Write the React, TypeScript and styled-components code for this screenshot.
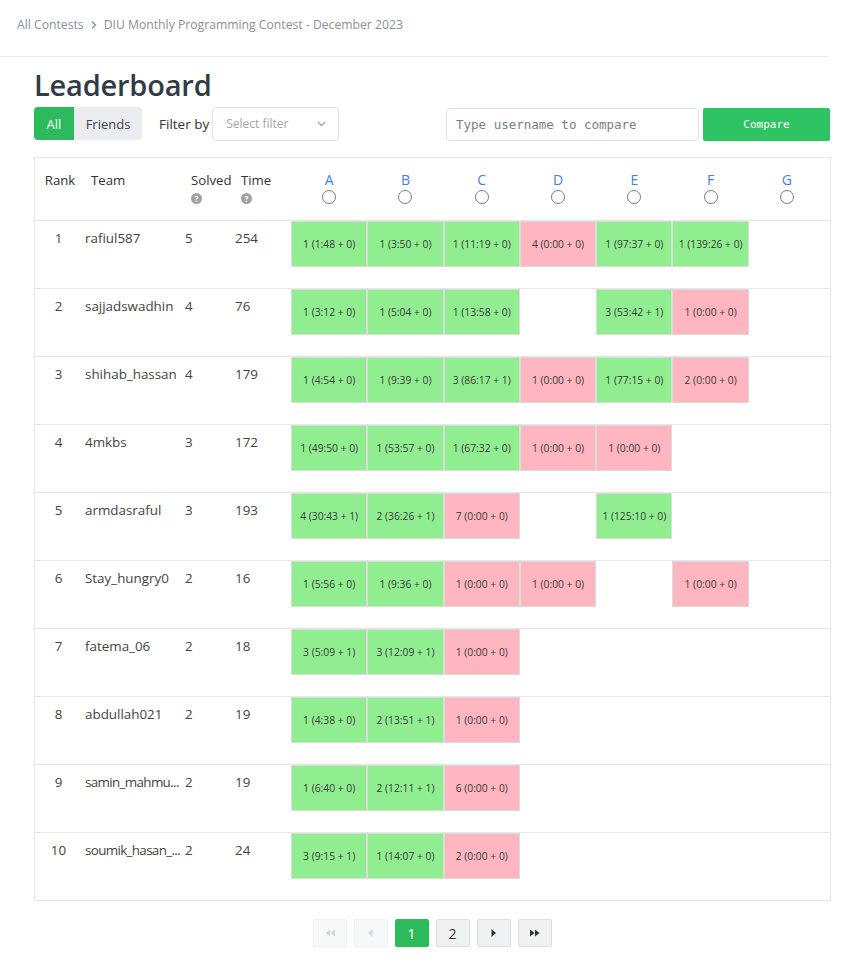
import React from "react";
import styled, { createGlobalStyle } from "styled-components";

const Global = createGlobalStyle`
  html, body { margin: 0; padding: 0; background: #fff; }
  body { font-family: "Open Sans", "Noto Sans", sans-serif; color: #333; }
  * { box-sizing: border-box; }
`;

const Page = styled.div`
  width: 864px;
  min-height: 967px;
`;

const Breadcrumb = styled.nav`
  width: 828px;
  height: 57px;
  padding: 16px 17px 0;
  border-bottom: 1px solid #ececec;
  display: flex;
  align-items: flex-start;
  gap: 6px;
  font-size: 12.2px;
  color: #8b8f98;
`;

const Crumb = styled.span`
  line-height: 18px;
`;

const Chevron = styled.svg`
  width: 8px;
  height: 18px;
`;

const Main = styled.main`
  padding: 8px 34px 0;
  width: 864px;
`;

const Title = styled.h1`
  margin: 0;
  font-size: 29px;
  font-weight: 600;
  color: #323a45;
  line-height: 40px;
  letter-spacing: -0.2px;
`;

const Toolbar = styled.div`
  display: flex;
  align-items: center;
  margin-top: 2px;
  height: 33px;
`;

const Segmented = styled.div`
  display: flex;
  height: 33px;
  border-radius: 4px;
  overflow: hidden;
`;

const SegButton = styled.button<{ $active?: boolean }>`
  border: none;
  margin: 0;
  padding: 0;
  font-family: inherit;
  font-size: 13px;
  background: ${(p) => (p.$active ? "#2dba5d" : "#ebecef")};
  color: ${(p) => (p.$active ? "#fff" : "#3d4450")};
  width: ${(p) => (p.$active ? "40px" : "68px")};
`;

const FilterLabel = styled.span`
  margin-left: 17px;
  font-size: 13.5px;
  color: #333;
`;

const Select = styled.div`
  margin-left: 3px;
  width: 127px;
  height: 34px;
  border: 1px solid #e2e2e2;
  border-radius: 4px;
  display: flex;
  align-items: center;
  justify-content: space-between;
  padding: 0 12px 0 13px;
  font-size: 12px;
  color: #a3a6ad;
`;

const Spacer = styled.div`
  flex: 1;
`;

const CompareInput = styled.input`
  width: 253px;
  height: 33px;
  margin-top: 1px;
  border: 1px solid #e2e2e2;
  border-radius: 4px;
  padding: 0 9px;
  font-family: "DejaVu Sans Mono", "Liberation Mono", monospace;
  font-size: 12.5px;
  color: #333;
  outline: none;
  &::placeholder { color: #7b7e84; }
`;

const CompareButton = styled.button`
  margin-left: 4px;
  margin-top: 2px;
  width: 127px;
  height: 33px;
  border: none;
  border-radius: 2px;
  background: #2ec463;
  color: #fff;
  font-family: "DejaVu Sans Mono", "Liberation Mono", monospace;
  font-size: 11px;
  font-weight: 400;
`;

const Table = styled.div`
  margin-top: 17px;
  width: 797px;
  border: 1px solid #e6e6e6;
`;

const cols = "50px 100px 50px 56px repeat(7, 76.3px) 1fr";

const HeadRow = styled.div`
  display: grid;
  grid-template-columns: ${cols};
  height: 62px;
`;

const HeadCell = styled.div<{ $center?: boolean }>`
  padding-top: 12px;
  padding-left: ${(p) => (p.$center ? "0" : "6px")};
  text-align: ${(p) => (p.$center ? "center" : "left")};
  font-size: 13.2px;
  font-weight: 500;
  color: #333;
  line-height: 20px;
  white-space: nowrap;
`;

const HelpIcon = styled.span`
  display: block;
  margin-top: 3px;
  width: 11px;
  height: 11px;
  border-radius: 50%;
  background: #9ea1a6;
  color: #fff;
  font-size: 8px;
  font-weight: 700;
  line-height: 11px;
  text-align: center;
`;

const ProblemHead = styled.div`
  padding-top: 13px;
  display: flex;
  flex-direction: column;
  align-items: center;
`;

const Letter = styled.span`
  font-size: 14px;
  color: #3d82e0;
  line-height: 17px;
`;

const Radio = styled.span`
  margin-top: 2px;
  width: 14px;
  height: 14px;
  border: 1px solid #7c7c7c;
  border-radius: 50%;
`;

const Row = styled.div`
  display: grid;
  grid-template-columns: ${cols};
  height: 68px;
  border-top: 1px solid #e6e6e6;
`;

const TextCell = styled.div<{ $center?: boolean }>`
  padding-top: 7px;
  text-align: ${(p) => (p.$center ? "center" : "left")};
  font-size: 13.4px;
  line-height: 20px;
  color: #444;
  white-space: nowrap;
`;

const RankCell = styled(TextCell)`
  padding-right: 3px;
`;

const TeamCell = styled(TextCell)<{ $condensed?: boolean }>`
  letter-spacing: ${(p) => (p.$condensed ? "-0.65px" : "0")};
`;

const ProbCell = styled.div<{ $kind: "ok" | "bad" | "none" }>`
  height: 46px;
  display: flex;
  align-items: center;
  justify-content: center;
  font-size: 10.3px;
  color: #3a3a3a;
  white-space: nowrap;
  background: ${(p) =>
    p.$kind === "ok" ? "#90ee90" : p.$kind === "bad" ? "#ffb6c1" : "transparent"};
  border: ${(p) => (p.$kind === "none" ? "none" : "1px solid #d9dcd9")};
`;

const Pager = styled.div`
  display: flex;
  justify-content: center;
  gap: 7px;
  margin-top: 18px;
`;

const PageBtn = styled.button<{ $variant: "disabled" | "active" | "normal" }>`
  width: 34px;
  height: 28px;
  margin: 0;
  padding: 0;
  border-radius: 2px;
  display: flex;
  align-items: center;
  justify-content: center;
  font-family: inherit;
  font-size: 14px;
  border: 1px solid
    ${(p) => (p.$variant === "active" ? "#2dba5d" : p.$variant === "disabled" ? "#f0f1f3" : "#dcdee2")};
  background: ${(p) =>
    p.$variant === "active" ? "#2dba5d" : p.$variant === "disabled" ? "#f7f8fa" : "#f0f1f3"};
  color: ${(p) => (p.$variant === "active" ? "#fff" : p.$variant === "disabled" ? "#d3d6da" : "#333")};
`;

type Cell = [string, "ok" | "bad"] | null;

const G = (t: string): Cell => [t, "ok"];
const P = (t: string): Cell => [t, "bad"];

const rows: { rank: number; team: string; short?: boolean; solved: number; time: number; cells: Cell[] }[] = [
  { rank: 1, team: "rafiul587", solved: 5, time: 254, cells: [G("1 (1:48 + 0)"), G("1 (3:50 + 0)"), G("1 (11:19 + 0)"), P("4 (0:00 + 0)"), G("1 (97:37 + 0)"), G("1 (139:26 + 0)"), null] },
  { rank: 2, team: "sajjadswadhin", solved: 4, time: 76, cells: [G("1 (3:12 + 0)"), G("1 (5:04 + 0)"), G("1 (13:58 + 0)"), null, G("3 (53:42 + 1)"), P("1 (0:00 + 0)"), null] },
  { rank: 3, team: "shihab_hassan", solved: 4, time: 179, cells: [G("1 (4:54 + 0)"), G("1 (9:39 + 0)"), G("3 (86:17 + 1)"), P("1 (0:00 + 0)"), G("1 (77:15 + 0)"), P("2 (0:00 + 0)"), null] },
  { rank: 4, team: "4mkbs", solved: 3, time: 172, cells: [G("1 (49:50 + 0)"), G("1 (53:57 + 0)"), G("1 (67:32 + 0)"), P("1 (0:00 + 0)"), P("1 (0:00 + 0)"), null, null] },
  { rank: 5, team: "armdasraful", solved: 3, time: 193, cells: [G("4 (30:43 + 1)"), G("2 (36:26 + 1)"), P("7 (0:00 + 0)"), null, G("1 (125:10 + 0)"), null, null] },
  { rank: 6, team: "Stay_hungry0", solved: 2, time: 16, cells: [G("1 (5:56 + 0)"), G("1 (9:36 + 0)"), P("1 (0:00 + 0)"), P("1 (0:00 + 0)"), null, P("1 (0:00 + 0)"), null] },
  { rank: 7, team: "fatema_06", solved: 2, time: 18, cells: [G("3 (5:09 + 1)"), G("3 (12:09 + 1)"), P("1 (0:00 + 0)"), null, null, null, null] },
  { rank: 8, team: "abdullah021", solved: 2, time: 19, cells: [G("1 (4:38 + 0)"), G("2 (13:51 + 1)"), P("1 (0:00 + 0)"), null, null, null, null] },
  { rank: 9, team: "samin_mahmu...", short: true, solved: 2, time: 19, cells: [G("1 (6:40 + 0)"), G("2 (12:11 + 1)"), P("6 (0:00 + 0)"), null, null, null, null] },
  { rank: 10, team: "soumik_hasan_...", short: true, solved: 2, time: 24, cells: [G("3 (9:15 + 1)"), G("1 (14:07 + 0)"), P("2 (0:00 + 0)"), null, null, null, null] },
];

const problems = ["A", "B", "C", "D", "E", "F", "G"];

const Tri = ({ dir, double }: { dir: "l" | "r"; double?: boolean }) => (
  <svg width={double ? 12 : 7} height="10" viewBox={double ? "0 0 12 10" : "0 0 7 10"}>
    {dir === "r" ? (
      double ? (
        <path d="M1 1.5 L5.5 5 L1 8.5 Z M6 1.5 L10.5 5 L6 8.5 Z" fill="currentColor" />
      ) : (
        <path d="M1.5 1 L6 5 L1.5 9 Z" fill="currentColor" />
      )
    ) : double ? (
      <path d="M6 1.5 L1.5 5 L6 8.5 Z M11 1.5 L6.5 5 L11 8.5 Z" fill="currentColor" />
    ) : (
      <path d="M5.5 1 L1 5 L5.5 9 Z" fill="currentColor" />
    )}
  </svg>
);

export default function App() {
  return (
    <Page>
      <Global />
      <Breadcrumb>
        <Crumb>All Contests</Crumb>
        <Chevron viewBox="0 0 8 18">
          <path d="M2 5.5 L5.5 9 L2 12.5" fill="none" stroke="#8b8f98" strokeWidth="1.4" />
        </Chevron>
        <Crumb>DIU Monthly Programming Contest - December 2023</Crumb>
      </Breadcrumb>
      <Main>
        <Title>Leaderboard</Title>
        <Toolbar>
          <Segmented>
            <SegButton $active>All</SegButton>
            <SegButton>Friends</SegButton>
          </Segmented>
          <FilterLabel>Filter by</FilterLabel>
          <Select>
            <span>Select filter</span>
            <svg width="9" height="6" viewBox="0 0 9 6">
              <path d="M1 1 L4.5 4.5 L8 1" fill="none" stroke="#a3a6ad" strokeWidth="1.3" />
            </svg>
          </Select>
          <Spacer />
          <CompareInput placeholder="Type username to compare" />
          <CompareButton>Compare</CompareButton>
        </Toolbar>
        <Table>
          <HeadRow>
            <HeadCell $center>Rank</HeadCell>
            <HeadCell>Team</HeadCell>
            <HeadCell>
              Solved
              <HelpIcon>?</HelpIcon>
            </HeadCell>
            <HeadCell>
              Time
              <HelpIcon>?</HelpIcon>
            </HeadCell>
            {problems.map((p) => (
              <ProblemHead key={p}>
                <Letter>{p}</Letter>
                <Radio />
              </ProblemHead>
            ))}
            <div />
          </HeadRow>
          {rows.map((r) => (
            <Row key={r.rank}>
              <RankCell $center>{r.rank}</RankCell>
              <TeamCell $condensed={r.short}>{r.team}</TeamCell>
              <TextCell>{r.solved}</TextCell>
              <TextCell>{r.time}</TextCell>
              {r.cells.map((c, i) =>
                c ? (
                  <ProbCell key={i} $kind={c[1]}>
                    {c[0]}
                  </ProbCell>
                ) : (
                  <ProbCell key={i} $kind="none" />
                )
              )}
              <div />
            </Row>
          ))}
        </Table>
        <Pager>
          <PageBtn $variant="disabled">
            <Tri dir="l" double />
          </PageBtn>
          <PageBtn $variant="disabled">
            <Tri dir="l" />
          </PageBtn>
          <PageBtn $variant="active">1</PageBtn>
          <PageBtn $variant="normal">2</PageBtn>
          <PageBtn $variant="normal">
            <Tri dir="r" />
          </PageBtn>
          <PageBtn $variant="normal">
            <Tri dir="r" double />
          </PageBtn>
        </Pager>
      </Main>
    </Page>
  );
}
